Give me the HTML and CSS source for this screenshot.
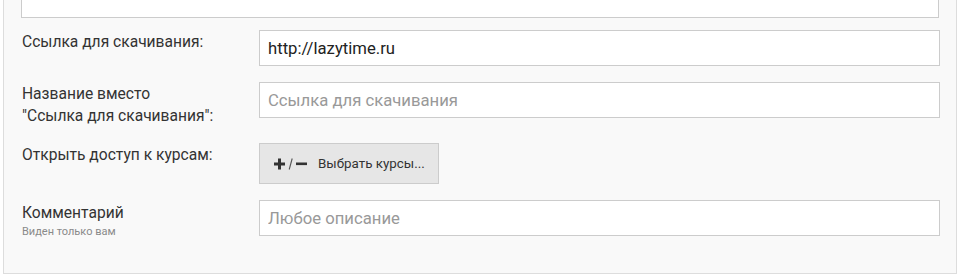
FILE: index.html
```html
<!DOCTYPE html>
<html lang="ru">
<head>
<meta charset="utf-8">
<link rel="stylesheet" href="styles.css">
</head>
<body>
<div class="panel">
  <textarea class="area"></textarea>
  <div class="row">
    <label class="lbl">Ссылка для скачивания:</label>
    <div class="field"><input class="inp" type="text" value="http://lazytime.ru"></div>
  </div>
  <div class="row">
    <label class="lbl">Название вместо<br>"Ссылка для скачивания":</label>
    <div class="field"><input class="inp" type="text" placeholder="Ссылка для скачивания"></div>
  </div>
  <div class="row">
    <label class="lbl">Открыть доступ к курсам:</label>
    <div class="field">
      <button class="btn" type="button">
        <span class="pm">
          <svg class="ico" width="34" height="12" viewBox="0 0 34 12">
            <rect x="0" y="4.5" width="11" height="3" fill="#333"/>
            <rect x="4" y="0.5" width="3" height="11" fill="#333"/>
            <path d="M15.2 11.5 L18.2 0.5" stroke="#555" stroke-width="1.1" fill="none"/>
            <rect x="22" y="4.5" width="11" height="2.6" fill="#333"/>
          </svg>
        </span>
        <span class="btn-txt">Выбрать курсы...</span>
      </button>
    </div>
  </div>
  <div class="row">
    <div class="lbl">
      <div class="lbl-main">Комментарий</div>
      <div class="lbl-sub">Виден только вам</div>
    </div>
    <div class="field"><input class="inp" type="text" placeholder="Любое описание"></div>
  </div>
</div>
</body>
</html>
```
FILE: styles.css
```css
html, body {
  margin: 0;
  padding: 0;
  background: #fff;
  overflow: hidden;
}
body {
  font-family: Roboto, "Liberation Sans", sans-serif;
  color: #333;
}
.panel {
  margin: -60px 0 0 3px;
  width: 954px;
  box-sizing: border-box;
  border: 1px solid #ddd;
  background: #f9f9f9;
  padding: 16px 17px 18px 17px;
}
.area {
  display: block;
  box-sizing: border-box;
  width: 918px;
  height: 61px;
  border: 1px solid #ccc;
  background: #fff;
  margin: 0 0 12px 0;
  resize: none;
}
.row {
  display: flex;
  align-items: flex-start;
  margin-bottom: 16px;
}
.lbl {
  box-sizing: border-box;
  width: 238px;
  flex: none;
  font-size: 15.6px;
  line-height: 22px;
  padding-top: 1px;
  padding-left: 1px;
  color: #333;
}
.field {
  flex: 1;
}
.inp {
  display: block;
  box-sizing: border-box;
  width: 681px;
  height: 36px;
  border: 1px solid #ccc;
  background: #fff;
  padding: 0 8px;
  font-family: Roboto, "Liberation Sans", sans-serif;
  font-size: 16.7px;
  color: #222;
  outline: none;
}
.inp::placeholder {
  color: #999;
}
.btn {
  display: flex;
  align-items: center;
  box-sizing: border-box;
  width: 180px;
  height: 41px;
  border: 1px solid #ccc;
  background: #e6e6e6;
  padding: 0 0 0 14px;
  font-family: Roboto, "Liberation Sans", sans-serif;
  font-size: 13.4px;
  color: #333;
  cursor: pointer;
}
.pm {
  display: flex;
  align-items: center;
  margin-right: 10px;
}
.ico {
  display: block;
}
.lbl-main {
  font-size: 15.6px;
  line-height: 22px;
  padding-top: 1px;
}
.lbl-sub {
  font-size: 11px;
  line-height: 14px;
  color: #8a8a8a;
  margin-top: 1px;
}
```
